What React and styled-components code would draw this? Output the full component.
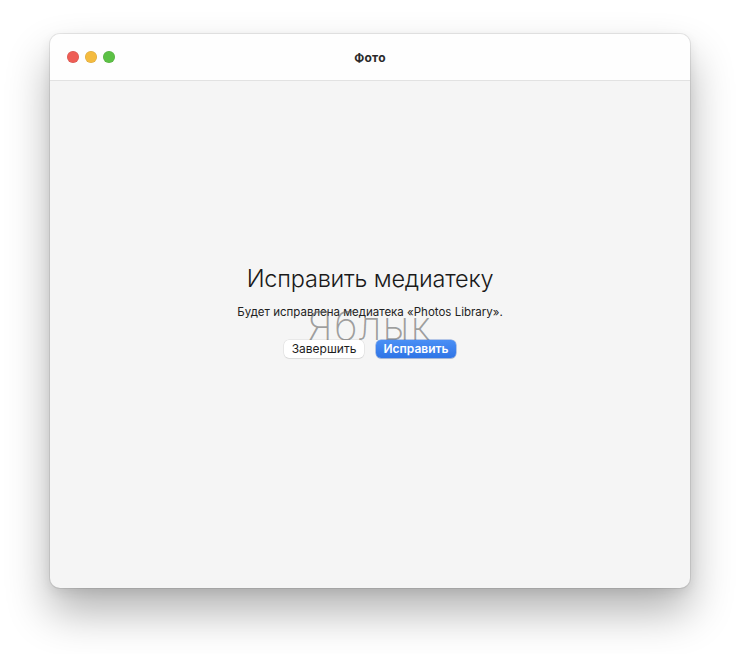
import React from "react";
import styled, { createGlobalStyle } from "styled-components";

const Global = createGlobalStyle`
  html, body { margin: 0; padding: 0; background: #ffffff; }
  body { font-family: Inter, "Noto Sans", "Liberation Sans", sans-serif; }
  #root { width: 740px; height: 654px; }
`;

const Page = styled.div`
  width: 740px;
  height: 654px;
  padding: 34px 50px 66px;
  box-sizing: border-box;
  display: flex;
`;

const Window = styled.div`
  flex: 1;
  display: flex;
  flex-direction: column;
  border-radius: 10px;
  overflow: hidden;
  background: #f5f5f5;
  box-shadow: 0 0 0 1px rgba(0,0,0,0.08), 0 24px 44px rgba(0,0,0,0.3), 0 4px 12px rgba(0,0,0,0.08);
`;

const TitleBar = styled.div`
  height: 46px;
  flex: none;
  background: #fefefe;
  border-bottom: 1px solid #e2e2e2;
  display: grid;
  grid-template-columns: 1fr auto 1fr;
  align-items: center;
  padding: 0 17px;
`;

const Lights = styled.div`
  display: flex;
  gap: 6px;
`;

const Light = styled.span`
  width: 12px;
  height: 12px;
  border-radius: 50%;
  background: ${(p) => p.$c};
  box-shadow: inset 0 0 0 0.5px rgba(0,0,0,0.12);
`;

const Title = styled.div`
  font-size: 12px;
  font-weight: 700;
  color: #2a2a2a;
  letter-spacing: 0.2px;
`;

const Content = styled.div`
  flex: 1;
  display: flex;
  flex-direction: column;
  align-items: center;
  padding-top: 183px;
`;

const Stack = styled.div`
  position: relative;
  display: flex;
  flex-direction: column;
  align-items: center;
`;

const Heading = styled.h1`
  margin: 0;
  font-size: 23.5px;
  font-weight: 300;
  color: #1a1a1a;
  line-height: 30px;
  letter-spacing: -0.2px;
`;

const Sub = styled.p`
  margin: 10px 0 0;
  font-size: 11.5px;
  color: #222;
  line-height: 16px;
`;

const Buttons = styled.div`
  position: relative;
  z-index: 1;
  display: flex;
  gap: 12px;
  margin-top: 20px;
`;

const Button = styled.button`
  height: 18px;
  width: 80px;
  border: none;
  border-radius: 5px;
  font-family: inherit;
  font-size: 12px;
  padding: 0;
  line-height: 18px;
  background: ${(p) => (p.$primary ? "linear-gradient(#4a8ff5, #2f74e6)" : "#ffffff")};
  color: ${(p) => (p.$primary ? "#ffffff" : "#1d1d1d")};
  font-weight: ${(p) => (p.$primary ? 600 : 400)};
  box-shadow: ${(p) =>
    p.$primary
      ? "0 0 0 0.5px rgba(30,90,200,0.6), 0 1px 1px rgba(0,0,0,0.1)"
      : "0 0 0 0.5px rgba(0,0,0,0.1), 0 1px 1px rgba(0,0,0,0.06)"};
`;

const Watermark = styled.div`
  position: absolute;
  left: 50%;
  top: 38px;
  transform: translateX(-50%);
  font-family: Inter, "Liberation Sans", sans-serif;
  font-size: 40px;
  font-weight: 250;
  color: rgba(100,100,100,0.6);
  pointer-events: none;
  white-space: nowrap;
  letter-spacing: 1.5px;
  line-height: 48px;
`;

export default function App() {
  return (
    <>
      <Global />
      <Page>
        <Window>
          <TitleBar>
            <Lights>
              <Light $c="#ee5d55" />
              <Light $c="#f4bb3f" />
              <Light $c="#5cc145" />
            </Lights>
            <Title>Фото</Title>
            <span />
          </TitleBar>
          <Content>
            <Stack>
              <Heading>Исправить медиатеку</Heading>
              <Sub>Будет исправлена медиатека «Photos Library».</Sub>
              <Watermark>Яблык</Watermark>
              <Buttons>
                <Button>Завершить</Button>
                <Button $primary>Исправить</Button>
              </Buttons>
            </Stack>
          </Content>
        </Window>
      </Page>
    </>
  );
}
